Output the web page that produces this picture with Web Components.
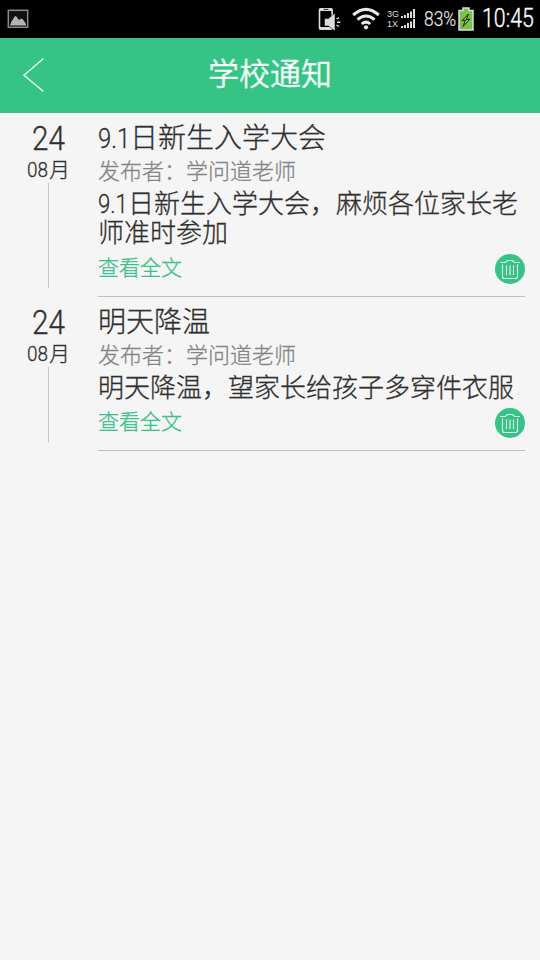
<!DOCTYPE html>
<html lang="zh-CN">
<head>
<meta charset="utf-8">
<title>学校通知</title>
<style>
html,body{margin:0;height:100%;background:#f5f5f5}
body{font-family:Roboto,"Noto Sans CJK SC",sans-serif;font-weight:300;overflow:hidden}
</style>
</head>
<body>
<notice-app></notice-app>
<script>
const define = (name, html, setup) => {
  const t = document.createElement('template');
  t.innerHTML = html;
  customElements.define(name, class extends HTMLElement {
    constructor() {
      super();
      this.attachShadow({mode: 'open'}).append(t.content.cloneNode(true));
    }
    connectedCallback() { if (setup) setup(this); }
  });
};

/* Condensed run of latin digits: w = drawn width, sx = horizontal scale. */
define('narrow-text', `<style>
:host{display:inline-block;white-space:nowrap}
span{display:inline-block;transform-origin:0 50%}
</style><span><slot></slot></span>`, el => {
  el.style.width = el.getAttribute('w') + 'px';
  el.shadowRoot.querySelector('span').style.transform = `scaleX(${el.getAttribute('sx')})`;
});

define('status-bar', `<style>
:host{display:flex;height:38px;background:#000;color:#e4e4e4;align-items:center;box-sizing:border-box;padding-left:7px}
svg{display:block;flex:none}
.gap{flex:1}
.net{font:9px/10px "Liberation Sans",sans-serif;display:grid;grid-template-rows:10px 10px;width:14px;margin:0 0 0 7px;color:#ddd}
.net span{height:10px}
.bars{margin-right:9px}
.pct{font-size:20px;font-weight:300;line-height:38px;-webkit-text-stroke:.2px}
.time{font-size:26px;font-weight:300;line-height:38px;color:#fff;margin-left:8px;-webkit-text-stroke:.35px}
.time narrow-text{position:relative;top:-1px}
</style>
<svg width="22" height="22" viewBox="0 0 22 22"><rect x="1.3" y="2.3" width="19.4" height="17" fill="#111" stroke="#8a8a8a" stroke-width="1.5"/><path d="M3 17.5 L4.5 13.5 Q6 11.5 8 8 L9.3 8.5 L12 12 L14.3 10.5 L16 11.5 L19 16 V17.5Z" fill="#b4b4b4"/></svg>
<span class="gap"></span>
<svg width="24" height="26" viewBox="0 0 24 26"><path d="M2.5 2H13Q15 2 15 4V22Q15 24 13 24H2.5Q.7 24 .7 22V4Q.7 2 2.5 2Z" fill="#ddd"/><path d="M2.3 5H13.4V21H2.3Z" fill="#000"/><path d="M5.5 3.4h5" stroke="#222"/><path d="M6.5 12.5H10.5L17 7V25L10.5 20H6.5Z" fill="#ddd" stroke="#000" stroke-width=".5"/><path d="M18.5 13L21 11.7M19 16.2H22.3M18.5 19.2L21 20.5" stroke="#ddd" stroke-width="1.4"/></svg>
<svg style="margin-left:10px" width="28" height="24" viewBox="0 0 28 24" fill="none" stroke="#e8e8e8" stroke-width="3"><path d="M1.2 8Q14 -3.2 26.8 8"/><path d="M5.5 12.7Q14 5.2 22.5 12.7"/><path d="M9.7 17Q14 13.2 18.3 17"/><circle cx="14" cy="20.3" r="2.1" fill="#e8e8e8" stroke="none"/></svg>
<div class="net"><span>3G</span><span>1X</span></div>
<svg class="bars" width="14" height="20" viewBox="0 0 14 20" fill="#ddd"><path d="M0 7h2v2H0zM3 6h2v3H3zM6 4h2v5H6zM9 2.5h2v6.5H9zM12 0h2v9h-2z"/><path transform="translate(0 10)" d="M0 7h2v2H0zM3 6h2v3H3zM6 4h2v5H6zM9 2.5h2v6.5H9zM12 0h2v9h-2z"/></svg>
<span class="pct"><narrow-text w="34" sx=".87">83%</narrow-text></span>
<svg width="16" height="24" viewBox="0 0 16 24"><path d="M1 3.5H5V1H11V3.5H15V23H1Z" fill="#7ac14b" stroke="#ddd" stroke-width="1.5"/><path d="M10.5 7L4 13.7L7.5 13L5 19.5L12 12L8.2 12.8Z" fill="#95d36b" stroke="#152b0b" stroke-width="1"/></svg>
<span class="time"><narrow-text w="58" sx=".82">10:45</narrow-text></span>`);

define('nav-bar', `<style>
:host{display:grid;grid-template-columns:58px 1fr 58px;align-items:center;height:75px;background:#36c486;color:#f2fff8}
svg{display:block;margin-left:22px;margin-top:-1px}
h1{margin:0;text-align:center;font-size:31px;line-height:73px;height:75px;font-weight:350;-webkit-text-stroke:.3px}
</style>
<svg width="24" height="36" viewBox="0 0 24 36"><path d="M21.5 1.5L2 18.2L21.5 34.5" fill="none" stroke="#e9fff4" stroke-width="1.4"/></svg>
<h1><slot></slot></h1>`);

define('delete-button', `<style>
:host{display:block;width:30px;height:30px}
svg{display:block}
</style>
<svg width="30" height="30" viewBox="0 0 30 30" fill="none" stroke="#dcfbec" stroke-width="1.1"><circle cx="15" cy="15" r="15" fill="#38c287" stroke="none"/><path d="M5.3 8.5H10.5Q11.5 6.5 13.5 6.5H16.5Q18.5 6.5 19.5 8.5H24.7M7.5 10.5V22.5Q7.5 24.5 9.5 24.5H20.5Q22.5 24.5 22.5 22.5V10.5M11.5 11.5V21M15 11.5V21M18.5 11.5V21"/></svg>`);

define('notice-item', `<style>
:host{display:grid;grid-template-columns:98px 427px;color:#2f2f2f;-webkit-text-stroke:.3px}
.date{display:flex;flex-direction:column;align-items:center;width:97px}
.day{font-size:33px;line-height:38px;padding-top:7px;height:38px}
.month{font-size:21px;line-height:24px;height:24px;white-space:nowrap}
.line{width:1px;flex:1;background:#c7c7c7;margin:1px 0 9px}
.main{border-bottom:1px solid #bfbfbf;display:flex;flex-direction:column}
.title{font-size:28px;line-height:38px;padding-top:7px;white-space:nowrap}
.author{font-size:22px;line-height:28px;color:#858585}
.body{font-size:26px;line-height:29px;padding-top:4px;white-space:nowrap;min-height:var(--body-h,29px)}
.foot{display:flex;justify-content:space-between;align-items:center;height:30px;margin:5px 0 12px}
.link{font-size:21px;line-height:28px;color:#38c188;position:relative;top:-1px}
</style>
<div class="date"><div class="day"><slot name="day"></slot></div><div class="month"><slot name="month"></slot></div><div class="line"></div></div>
<div class="main"><div class="title"><slot name="title"></slot></div><div class="author"><slot name="author"></slot></div><div class="body"><slot name="body"></slot></div>
<div class="foot"><span class="link">查看全文</span><delete-button></delete-button></div></div>`);

define('notice-app', `<style>
:host{display:flex;flex-direction:column;width:540px;height:960px;background:#f5f5f5}
.tall{--body-h:59px}
</style>
<status-bar></status-bar>
<nav-bar>学校通知</nav-bar>
<notice-item class="tall">
<span slot="day"><narrow-text w="34" sx=".9">24</narrow-text></span>
<span slot="month"><narrow-text w="22" sx=".9">08</narrow-text>月</span>
<span slot="title"><narrow-text w="32" sx=".85">9.1</narrow-text>日新生入学大会</span>
<span slot="author">发布者：学问道老师</span>
<span slot="body"><narrow-text w="30" sx=".85">9.1</narrow-text>日新生入学大会，麻烦各位家长老<br>师准时参加</span>
</notice-item>
<notice-item>
<span slot="day"><narrow-text w="34" sx=".9">24</narrow-text></span>
<span slot="month"><narrow-text w="22" sx=".9">08</narrow-text>月</span>
<span slot="title">明天降温</span>
<span slot="author">发布者：学问道老师</span>
<span slot="body">明天降温，望家长给孩子多穿件衣服</span>
</notice-item>`);
</script>
</body>
</html>
